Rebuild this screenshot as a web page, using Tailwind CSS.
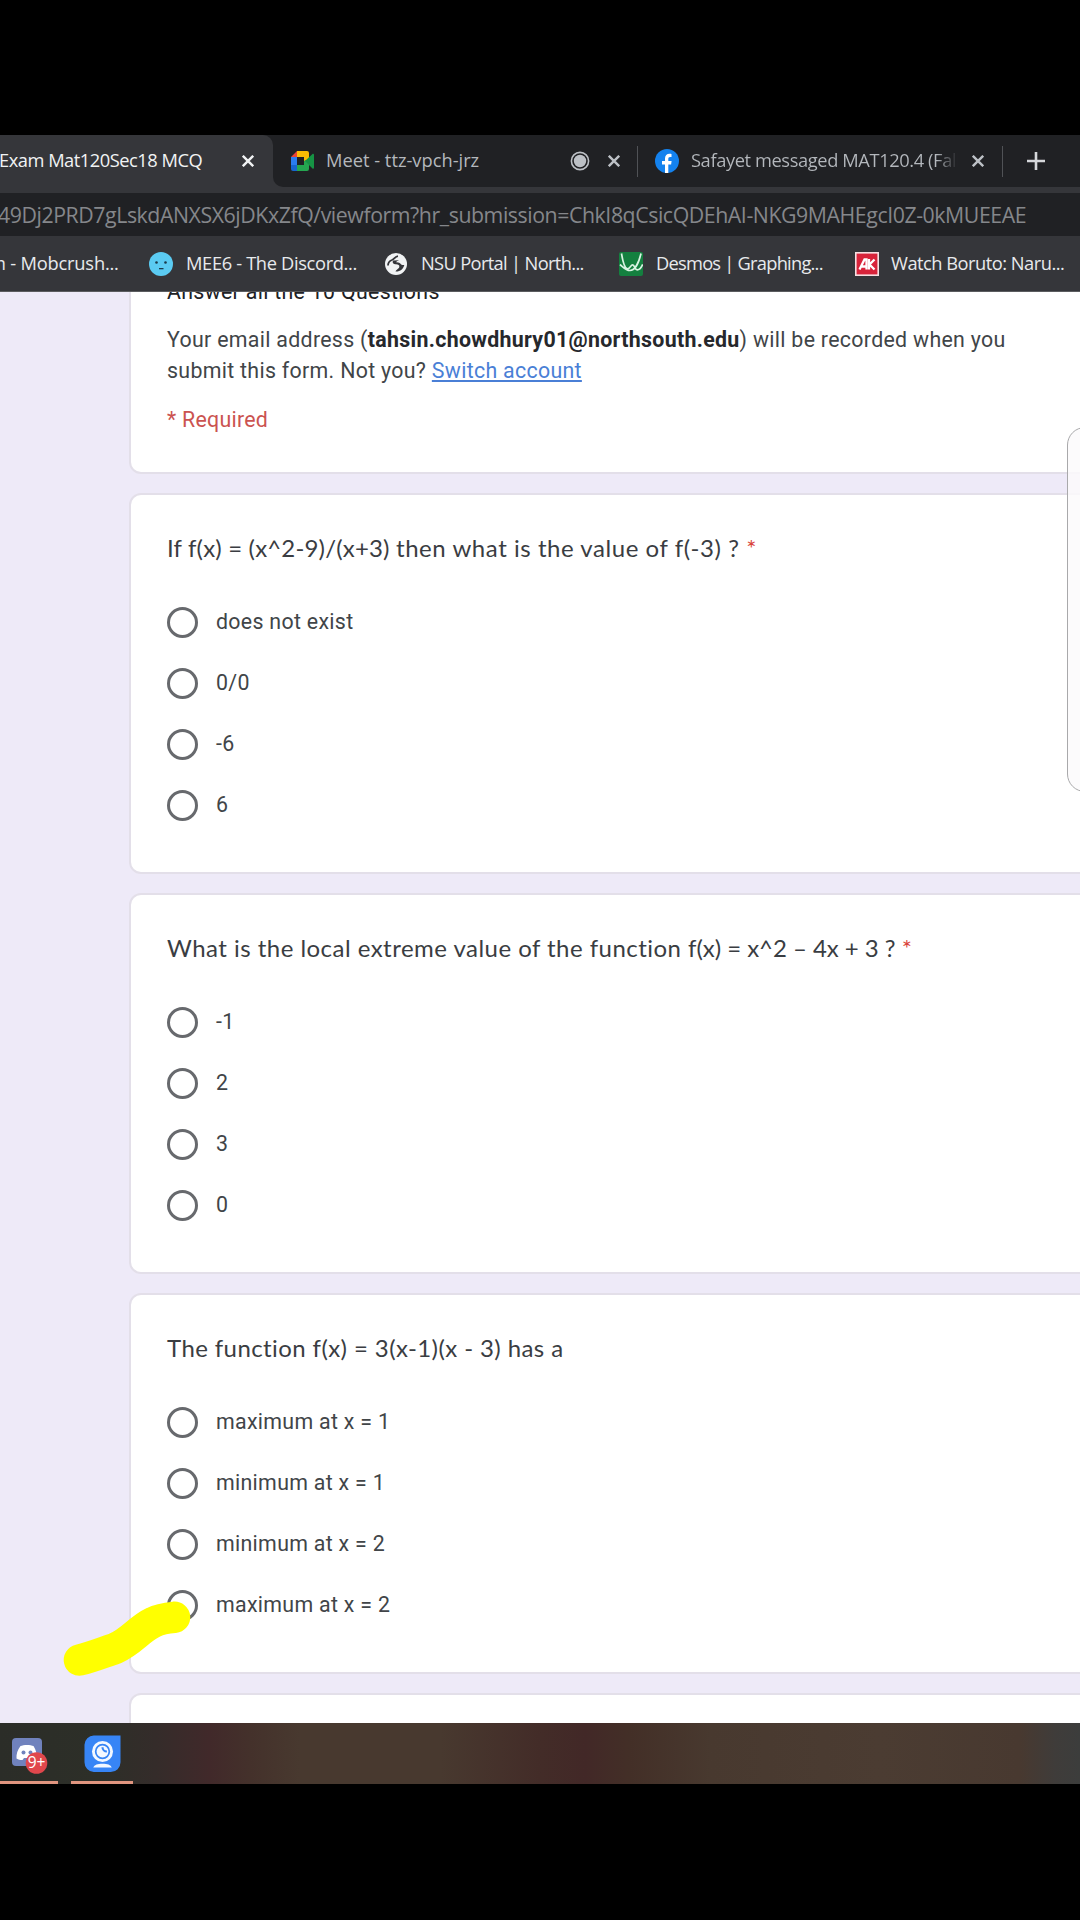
<!DOCTYPE html>
<html lang="en">
<head>
<meta charset="utf-8">
<title>Exam Mat120Sec18 MCQ</title>
<script src="https://cdn.jsdelivr.net/npm/@tailwindcss/browser@4"></script>
</head>
<body class="bg-black">
<div class="relative flex h-[1920px] w-[1080px] flex-col overflow-hidden bg-black pt-[135px] whitespace-nowrap">

  <!-- Browser chrome -->
  <header class="flex h-[157px] shrink-0 flex-col border-b border-[#5b5c5f] bg-[#35363a] font-['Open_Sans',sans-serif] text-[18.3px] leading-6">
    <!-- Tabs -->
    <div class="flex h-[52px] shrink-0 bg-[#35363a]">
      <div class="flex w-[273px] shrink-0 bg-[#202124]">
        <div class="flex w-full items-center rounded-tr-[10px] bg-[#35363a] text-[#f1f3f4]">
          <span class="-ml-px w-[243px] pb-[3px] tracking-[-0.48px]">Exam Mat120Sec18 MCQ</span>
          <svg class="size-3" viewBox="0 0 12 12" stroke="#f1f3f4" stroke-width="2.4"><path d="M.8.8l10.4 10.4M11.2.8L.8 11.2"/></svg>
        </div>
      </div>
      <div class="flex flex-1 items-center rounded-bl-[10px] bg-[#202124] text-[#b4b8bd]">
        <svg class="ml-[18px] h-5 w-[23px]" viewBox="0 0 23 20">
          <path d="M0 6L6 0v6z" fill="#ea4335"/>
          <path d="M0 6h6v8H0z" fill="#2a7cf0"/>
          <path d="M0 14h6v6H2a2 2 0 0 1-2-2z" fill="#1765d0"/>
          <path d="M6 0h10a2 2 0 0 1 2 2v7l-5 1V6H6z" fill="#fbbc04"/>
          <path d="M6 14h7v-4l5-2v10a2 2 0 0 1-2 2H6z" fill="#25a650"/>
          <path d="M14 10l7.500-7c.6-.5 1.500-.2 1.500.7v13c0 .9-.9 1.200-1.500.7z" fill="#169344"/>
        </svg>
        <span class="ml-3 w-[244px] pb-[3px]">Meet - ttz-vpch-jrz</span>
        <svg class="size-5" viewBox="0 0 20 20"><circle cx="10" cy="10" r="8.600" fill="none" stroke="#bdc1c6" stroke-width="1.600"/><circle cx="10" cy="10" r="6.200" fill="#bdc1c6"/></svg>
        <svg class="ml-[18px] size-3" viewBox="0 0 12 12" stroke="#bdc1c6" stroke-width="2.400"><path d="M.8.8l10.400 10.400M11.200.8L.8 11.200"/></svg>
        <i class="ml-[17px] h-[31px] w-px bg-[#505256]"></i>
        <svg class="ml-[17px] size-6" viewBox="0 0 24 24"><circle cx="12" cy="12" r="12" fill="#1482ee"/><path d="M10 24v-8.400H7v-3.500h3V9.500c0-3.100 1.800-4.700 4.500-4.700.9 0 2 .2 2 .2v3h-1.300c-1.500 0-1.900.9-1.900 1.900v2.200h3.300l-.5 3.500h-2.800V24z" fill="#fff"/></svg>
        <span class="ml-3 w-[267px] overflow-hidden bg-linear-to-r from-[#b4b8bd] from-92% to-[#202124] bg-clip-text pb-[3px] tracking-[-0.4px] text-transparent">Safayet messaged MAT120.4 (Fall</span>
        <svg class="ml-[14px] size-3" viewBox="0 0 12 12" stroke="#bdc1c6" stroke-width="2.400"><path d="M.8.8l10.400 10.400M11.200.8L.8 11.200"/></svg>
        <i class="ml-[18px] h-[31px] w-px bg-[#505256]"></i>
        <svg class="ml-6 size-[18px]" viewBox="0 0 18 18" stroke="#d5d7da" stroke-width="2.600"><path d="M9 0v18M0 9h18"/></svg>
      </div>
    </div>
    <!-- Address bar -->
    <div class="mt-[6px] flex h-[43px] shrink-0 items-center overflow-hidden bg-[#202124] text-[21.3px] leading-7 tracking-[-0.43px] text-[#85878b]"><span class="-ml-[2px]">49Dj2PRD7gLskdANXSX6jDKxZfQ/viewform?hr_submission=ChkI8qCsicQDEhAI-NKG9MAHEgcI0Z-0kMUEEAE</span></div>
    <!-- Bookmarks -->
    <nav class="flex h-[55px] shrink-0 items-center text-[#e8eaed]">
      <span class="ml-[-11px] w-[160px] pb-[2px] tracking-[-0.2px]">m - Mobcrush...</span>
      <svg class="size-6" viewBox="0 0 24 24"><circle cx="12" cy="12" r="12" fill="#5bcbf2"/><circle cx="7.500" cy="10.500" r="1.300" fill="#1b3a4a"/><circle cx="16.500" cy="10.500" r="1.300" fill="#1b3a4a"/><path d="M10 16h4.500v1.300H10z" fill="#1b3a4a"/></svg>
      <span class="ml-[13px] w-[199px] pb-[2px] tracking-[-0.35px]">MEE6 - The Discord...</span>
      <svg class="size-[22px]" viewBox="0 0 22 22"><circle cx="11" cy="11" r="11" fill="#f1f3f4"/><path d="M3 12.500c0-3 1.500-4.500 4-5.500 2.500-.8 3-3.500 6-3.800" fill="none" stroke="#35363a" stroke-width="1.800"/><path d="M8 7.500c-1 2.500.5 3.800 3 3.800 2.200 0 3.800 1 3.300 2.700-.6 2-2.300 1.800-3.800 4.500 4.500.3 8-2.500 8.800-6.500-2 .3-3-.4-4-1.500-1.300-1.400-3.300-1-4.300-1.200 1-1 1.500-1.500 3-2z" fill="#35363a"/></svg>
      <span class="ml-[14px] w-[198px] pb-[2px] tracking-[-0.66px]">NSU Portal | North...</span>
      <svg class="size-6" viewBox="0 0 24 24"><rect width="24" height="24" rx="2" fill="#14803f"/><path d="M2.500 1.500c1.500 9 3.500 15.300 6 15.300 2.800 0 3-4 5.200-4 2 0 2 5 4.500 5 2.200 0 4.200-2.300 5.500-5.500M22 1.500C20 10 16 18.500 11 18.500c-4 0-6.500-3-10-6" fill="none" stroke="#d9f3e2" stroke-width="1.700"/></svg>
      <span class="ml-[13px] w-[199px] pb-[2px] tracking-[-0.76px]">Desmos | Graphing...</span>
      <svg class="size-6" viewBox="0 0 24 24"><rect x=".8" y=".8" width="22.400" height="22.400" fill="#d8233a" stroke="#f6dfe2" stroke-width="1.600"/><path d="M4.500 17.500L9.500 7.500h2v10M6.500 14.500h5M14 7v10.500M19.500 7.500L14.500 12.500l5 5" fill="none" stroke="#fff" stroke-width="2.300"/></svg>
      <span class="ml-3 pb-[2px] tracking-[-0.5px]">Watch Boruto: Naru...</span>
    </nav>
  </header>

  <!-- Form -->
  <main class="relative flex h-[1431px] shrink-0 flex-col gap-[19px] overflow-hidden bg-[#eeeaf8] pl-[129px] font-['Roboto',sans-serif] text-[21.35px] tracking-[0.305px] text-[#414548]">
    <section class="flex h-[182px] w-[1100px] shrink-0 flex-col rounded-b-[12px] border-2 border-t-0 border-[#e3dfe9] bg-white pl-9 leading-[31px]">
      <p class="-mt-4 mb-[17px] text-[#202124]">Answer all the 10 Questions</p>
      <p>Your email address (<b class="font-bold text-[#26282c]">tahsin.chowdhury01@northsouth.edu</b>) will be recorded when you<br>submit this form. Not you? <a class="text-[#4a7fd6] underline decoration-2 underline-offset-2">Switch account</a></p>
      <p class="mt-[18px] tracking-[0.27px] text-[#cb5350]">* Required</p>
    </section>

    <section class="flex h-[381px] w-[1100px] shrink-0 flex-col rounded-[12px] border-2 border-[#e3dfe9] bg-white pt-[38px] pl-9">
      <h2 class="mb-[29px] font-['Lato',sans-serif] text-2xl leading-[30px] tracking-[0.55px] text-[#3a3d42]"><span class="tracking-[0.17px]">If f(x) = (x^2-9)/(x+3) </span>then what is the value of f(-3) ? <span class="text-[#d9443b]">*</span></h2>
      <label class="flex h-[61px] items-center gap-[18px]"><i class="size-[31px] rounded-full border-3 border-[#67696d]"></i><span class="pb-px">does not exist</span></label>
      <label class="flex h-[61px] items-center gap-[18px]"><i class="size-[31px] rounded-full border-3 border-[#67696d]"></i><span class="pb-px">0/0</span></label>
      <label class="flex h-[61px] items-center gap-[18px]"><i class="size-[31px] rounded-full border-3 border-[#67696d]"></i><span class="pb-px">-6</span></label>
      <label class="flex h-[61px] items-center gap-[18px]"><i class="size-[31px] rounded-full border-3 border-[#67696d]"></i><span class="pb-px">6</span></label>
    </section>

    <section class="flex h-[381px] w-[1100px] shrink-0 flex-col rounded-[12px] border-2 border-[#e3dfe9] bg-white pt-[38px] pl-9">
      <h2 class="mb-[29px] font-['Lato',sans-serif] text-2xl leading-[30px] tracking-[0.47px] text-[#3a3d42]">What is the local extreme value of the function <span class="tracking-[-0.04px]">f(x) = x^2 – 4x + 3 ? <span class="text-[#d9443b]">*</span></span></h2>
      <label class="flex h-[61px] items-center gap-[18px]"><i class="size-[31px] rounded-full border-3 border-[#67696d]"></i><span class="pb-px">-1</span></label>
      <label class="flex h-[61px] items-center gap-[18px]"><i class="size-[31px] rounded-full border-3 border-[#67696d]"></i><span class="pb-px">2</span></label>
      <label class="flex h-[61px] items-center gap-[18px]"><i class="size-[31px] rounded-full border-3 border-[#67696d]"></i><span class="pb-px">3</span></label>
      <label class="flex h-[61px] items-center gap-[18px]"><i class="size-[31px] rounded-full border-3 border-[#67696d]"></i><span class="pb-px">0</span></label>
    </section>

    <section class="flex h-[381px] w-[1100px] shrink-0 flex-col rounded-[12px] border-2 border-[#e3dfe9] bg-white pt-[38px] pl-9">
      <h2 class="mb-[29px] font-['Lato',sans-serif] text-2xl leading-[30px] tracking-[0.407px] text-[#3a3d42]">The function f(x) = 3(x-1)(x - 3) has a</h2>
      <label class="flex h-[61px] items-center gap-[18px]"><i class="size-[31px] rounded-full border-3 border-[#67696d]"></i><span class="pb-px">maximum at x = 1</span></label>
      <label class="flex h-[61px] items-center gap-[18px]"><i class="size-[31px] rounded-full border-3 border-[#67696d]"></i><span class="pb-px">minimum at x = 1</span></label>
      <label class="flex h-[61px] items-center gap-[18px]"><i class="size-[31px] rounded-full border-3 border-[#67696d]"></i><span class="pb-px">minimum at x = 2</span></label>
      <label class="flex h-[61px] items-center gap-[18px]"><i class="size-[31px] rounded-full border-3 border-[#67696d]"></i><span class="pb-px">maximum at x = 2</span></label>
    </section>

    <section class="h-[381px] w-[1100px] shrink-0 rounded-[12px] border-2 border-[#e3dfe9] bg-white"></section>

    <!-- Floating side panel, cut by the right edge -->
    <aside class="absolute top-[135px] left-[1067px] h-[365px] w-[60px] rounded-[18px] border-[1.500px] border-[#a9a9ab] bg-[#fcfafc]/85"></aside>

    <!-- Marker stroke -->
    <svg class="absolute top-[1308px] left-[50px] h-[90px] w-[160px]" viewBox="50 1600 160 90" fill="none" stroke="#ff0" stroke-width="31.500" stroke-linecap="round"><path d="M79.500 1660C92 1657 103 1652.500 115 1648.500C132 1641 139 1629 153 1622.500C161 1618.500 167 1618 174.500 1617.300"/></svg>
  </main>

  <!-- Taskbar -->
  <footer class="flex h-[61px] shrink-0 bg-[linear-gradient(90deg,#2b2d28_0,#2d2f28_100px,#342c2a_155px,#41292a_210px,#44312b_250px,#48392f_300px,#48392f_440px,#432c28_540px,#422827_585px,#432f27_630px,#48392f_710px,#4b3c32_880px,#483930_1020px,#3f3c3a_1055px,#3c3d3c_1080px)]">
    <div class="flex w-[58px] flex-col items-end justify-between">
      <svg class="mt-[14px] mr-[10px] h-[38px] w-[37px]" viewBox="0 0 37 38">
        <rect x="1" y="1" width="30" height="28" rx="4" fill="#7082bd"/>
        <path d="M9.500 9c3-1.500 10-1.500 13 0 2.500 4 3.500 8 3.200 12.500-2 1.400-3.500 1.600-5 1.500l-1.200-2h-6.500l-1.500 2c-1.800.1-4-.3-6-1.500C5.200 17 6.500 13 9.500 9z" fill="#fff"/>
        <circle cx="12.500" cy="15.500" r="2" fill="#7082bd"/><circle cx="19.500" cy="15.500" r="2" fill="#7082bd"/>
        <circle cx="25.500" cy="26" r="10.800" fill="#e0474c"/>
        <text x="25.500" y="31" text-anchor="middle" font-family="Open Sans, sans-serif" font-size="15.500" fill="#fff">9+</text>
      </svg>
      <i class="h-[3px] w-full bg-[#e0957f]"></i>
    </div>
    <div class="ml-[13px] flex w-[62px] flex-col items-center justify-between">
      <svg class="mt-[12px] size-[37px]" viewBox="0 0 38 38">
        <path d="M10 .5h27.500V28a10 10 0 0 1-10 10H10A10 10 0 0 1 .5 28V10A10 10 0 0 1 10 .5z" fill="#3785f6"/>
        <circle cx="19" cy="17" r="10.800" fill="#f3f8ff"/>
        <circle cx="19" cy="17" r="7" fill="none" stroke="#3785f6" stroke-width="1.800"/>
        <path d="M19 12.500a4.500 4.500 0 0 0 4.500 4.500" fill="none" stroke="#3785f6" stroke-width="2.200"/>
        <path d="M9.500 33.500c1-3 4.500-4 9.500-4s8.500 1 9.500 4z" fill="#f3f8ff"/>
      </svg>
      <i class="h-[3px] w-full bg-[#e0957f]"></i>
    </div>
  </footer>
</div>
</body>
</html>
